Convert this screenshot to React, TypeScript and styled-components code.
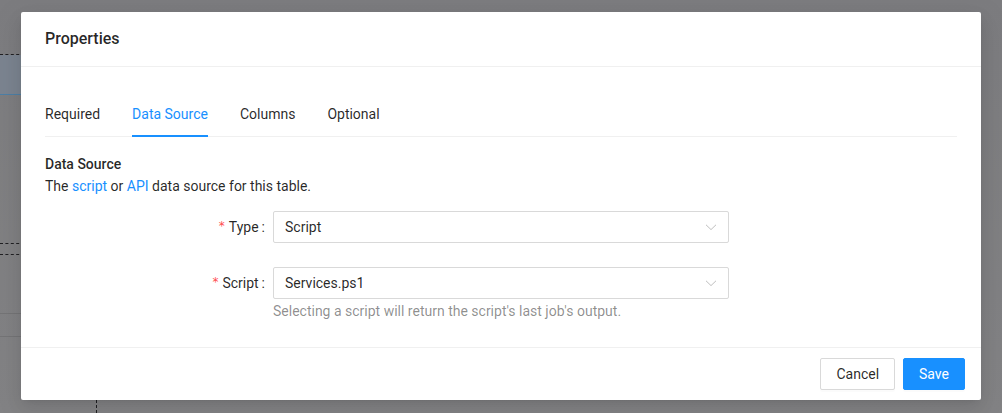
import React from "react";
import styled, { createGlobalStyle } from "styled-components";

const Global = createGlobalStyle`
  html, body { margin: 0; padding: 0; }
  body {
    width: 1002px;
    height: 413px;
    overflow: hidden;
    background: #808082;
    font-family: Roboto, "Open Sans", Arial, sans-serif;
    font-size: 14px;
    color: rgba(0,0,0,0.85);
  }
`;

const Stage = styled.div`
  position: relative;
  width: 1002px;
  height: 413px;
  overflow: hidden;
  background: linear-gradient(180deg, #7c7c7f 0%, #838385 100%);
`;

const Backdrop = styled.div`
  display: flex;
  flex-direction: column;
  padding-top: 54px;
`;

const DashLine = styled.div<{ $mt?: number }>`
  height: 0;
  width: 30px;
  margin-top: ${(p) => p.$mt ?? 0}px;
  border-top: 1px dashed #1f1f22;
`;

const SelectedBlock = styled.div`
  height: 39px;
  width: 30px;
  background: #7b8490;
  border-bottom: 1px solid #4d7fa6;
`;

const FaintLine = styled.div<{ $mt: number }>`
  height: 1px;
  width: 30px;
  margin-top: ${(p) => p.$mt}px;
  background: #747476;
`;

const VerticalDash = styled.div`
  position: absolute;
  left: 96px;
  top: 400px;
  height: 13px;
  border-left: 1px dashed #1f1f22;
`;

const Modal = styled.div`
  position: absolute;
  left: 21px;
  top: 12px;
  width: 960px;
  background: #fff;
  border-radius: 2px;
  box-shadow: 0 3px 6px -4px rgba(0,0,0,0.12), 0 6px 16px 0 rgba(0,0,0,0.08), 0 9px 28px 8px rgba(0,0,0,0.05);
  display: flex;
  flex-direction: column;
`;

const Header = styled.div`
  padding: 16px 24px;
  border-bottom: 1px solid #f0f0f0;
  font-size: 16px;
  font-weight: 500;
  line-height: 22px;
  color: rgba(0,0,0,0.85);
`;

const Body = styled.div`
  padding: 24px;
  font-size: 14px;
  line-height: 1.5715;
`;

const TabBar = styled.div`
  display: flex;
  border-bottom: 1px solid #f0f0f0;
  margin-bottom: 16px;
`;

const Tab = styled.div<{ $active?: boolean }>`
  position: relative;
  padding: 12px 0 11px;
  margin-right: 32px;
  line-height: 22px;
  color: ${(p) => (p.$active ? "#1890ff" : "rgba(0,0,0,0.85)")};
  &::after {
    content: "";
    position: absolute;
    left: 0;
    right: 0;
    bottom: -1px;
    height: 2px;
    background: ${(p) => (p.$active ? "#1890ff" : "transparent")};
  }
`;

const SectionTitle = styled.div`
  font-weight: 500;
  line-height: 22px;
`;

const Desc = styled.p`
  margin: 0 0 14px;
  line-height: 22px;
`;

const Link = styled.a`
  color: #1890ff;
  text-decoration: none;
`;

const FormRow = styled.div<{ $mb: number }>`
  display: grid;
  grid-template-columns: 228px 456px;
  margin-bottom: ${(p) => p.$mb}px;
`;

const Label = styled.label`
  display: flex;
  justify-content: flex-end;
  align-items: center;
  height: 32px;
  white-space: nowrap;
  &::after {
    content: ":";
    margin: 0 8px 0 3px;
  }
`;

const Req = styled.span`
  color: #ff4d4f;
  margin-right: 4px;
  font-family: "DejaVu Sans", sans-serif;
  font-size: 12px;
  line-height: 1;
  position: relative;
  top: -1px;
`;

const Control = styled.div`
  display: flex;
  flex-direction: column;
`;

const Select = styled.div`
  height: 32px;
  box-sizing: border-box;
  border: 1px solid #d9d9d9;
  border-radius: 2px;
  padding: 0 11px;
  display: flex;
  align-items: center;
  justify-content: space-between;
  background: #fff;
`;

const Help = styled.div`
  color: rgba(0,0,0,0.45);
  line-height: 24px;
  min-height: 24px;
`;

const Footer = styled.div`
  border-top: 1px solid #f0f0f0;
  padding: 10px 16px;
  display: flex;
  justify-content: flex-end;
  gap: 8px;
`;

const Button = styled.button<{ $primary?: boolean }>`
  height: 32px;
  padding: 4px 15px;
  font-family: inherit;
  font-size: 14px;
  line-height: 1.5715;
  border-radius: 2px;
  border: 1px solid ${(p) => (p.$primary ? "#1890ff" : "#d9d9d9")};
  background: ${(p) => (p.$primary ? "#1890ff" : "#fff")};
  color: ${(p) => (p.$primary ? "#fff" : "rgba(0,0,0,0.85)")};
  box-shadow: 0 2px 0 rgba(0,0,0,0.016);
`;

const Chevron = () => (
  <svg width="12" height="12" viewBox="0 0 12 12" fill="none">
    <path d="M1 3.8 L6 8.6 L11 3.8" stroke="#bfbfbf" strokeWidth="1" />
  </svg>
);

export default function App() {
  return (
    <Stage>
      <Global />
      <Backdrop>
        <DashLine />
        <SelectedBlock />
        <DashLine $mt={148} />
        <DashLine $mt={10} />
        <FaintLine $mt={58} />
        <FaintLine $mt={22} />
      </Backdrop>
      <VerticalDash />
      <Modal>
        <Header>Properties</Header>
        <Body>
          <TabBar>
            <Tab>Required</Tab>
            <Tab $active>Data Source</Tab>
            <Tab>Columns</Tab>
            <Tab>Optional</Tab>
          </TabBar>
          <SectionTitle>Data Source</SectionTitle>
          <Desc>
            The <Link>script</Link> or <Link>API</Link> data source for this table.
          </Desc>
          <FormRow $mb={24}>
            <Label>
              <Req>*</Req>Type
            </Label>
            <Control>
              <Select>
                <span>Script</span>
                <Chevron />
              </Select>
            </Control>
          </FormRow>
          <FormRow $mb={0}>
            <Label>
              <Req>*</Req>Script
            </Label>
            <Control>
              <Select>
                <span>Services.ps1</span>
                <Chevron />
              </Select>
              <Help>Selecting a script will return the script's last job's output.</Help>
            </Control>
          </FormRow>
        </Body>
        <Footer>
          <Button>Cancel</Button>
          <Button $primary>Save</Button>
        </Footer>
      </Modal>
    </Stage>
  );
}
